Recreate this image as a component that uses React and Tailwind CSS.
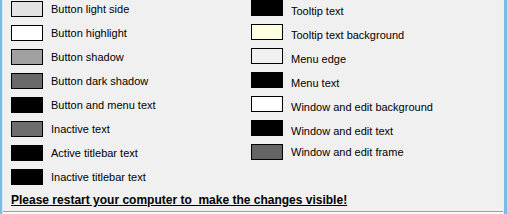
const left = [
  ["Button light side", "bg-[#e3e3e3]", ""],
  ["Button highlight", "bg-[#ffffff]", ""],
  ["Button shadow", "bg-[#a0a0a0]", ""],
  ["Button dark shadow", "bg-[#696969]", ""],
  ["Button and menu text", "bg-[#000000]", ""],
  ["Inactive text", "bg-[#6d6d6d]", ""],
  ["Active titlebar text", "bg-[#000000]", ""],
  ["Inactive titlebar text", "bg-[#000000]", ""],
];

const right = [
  ["Tooltip text", "bg-[#000000]", "translate-y-[3px]"],
  ["Tooltip text background", "bg-[#ffffe1]", "translate-y-[3px]"],
  ["Menu edge", "bg-[#f0f0f0]", "translate-y-[3px]"],
  ["Menu text", "bg-[#000000]", "translate-y-[3px]"],
  ["Window and edit background", "bg-[#ffffff]", "translate-y-[3px]"],
  ["Window and edit text", "bg-[#000000]", "translate-y-[3px]"],
  ["Window and edit frame", "bg-[#646464]", ""],
];

function ColorRow({ label, swatch, shift }) {
  return (
    <div className="flex h-[16px] items-center">
      <div className={`h-[16px] w-[32px] border border-black ${swatch}`} />
      <span className={`ml-[8px] leading-[14px] ${shift}`}>{label}</span>
    </div>
  );
}

export default function App() {
  return (
    <div
      className="flex h-[214px] w-[507px] overflow-hidden bg-[#f0f0f0] text-[11px] text-black"
      style={{ fontFamily: '"Liberation Sans", Arial, sans-serif' }}
    >
      <div className="w-[2px] bg-[#79bde6]" />
      <div className="w-[1px] bg-[#d6eaf7]" />
      <div className="flex flex-1 flex-col">
        <div className="flex flex-1 flex-col pl-[8px] pt-[1px]">
          {/* colour swatches */}
          <div className="flex">
            <div className="flex w-[240px] flex-col gap-[8px]">
              {left.map(([label, swatch, shift]) => (
                <ColorRow key={label} label={label} swatch={swatch} shift={shift} />
              ))}
            </div>
            <div className="flex flex-col gap-[8px] -mt-[1px]">
              {right.map(([label, swatch, shift]) => (
                <ColorRow key={label} label={label} swatch={swatch} shift={shift} />
              ))}
            </div>
          </div>

          <p className="mt-[8px] whitespace-pre text-[12px] font-bold leading-[14px] underline">
            Please restart your computer to  make the changes visible!
          </p>
        </div>
        <div className="h-[1px] bg-[#a0a0a0]" />
        <div className="h-[2px] bg-[#f8f8f8]" />
      </div>
      <div className="w-[1px] bg-[#e6f2fa]" />
      <div className="w-[3px] bg-[#79bde6]" />
    </div>
  );
}
